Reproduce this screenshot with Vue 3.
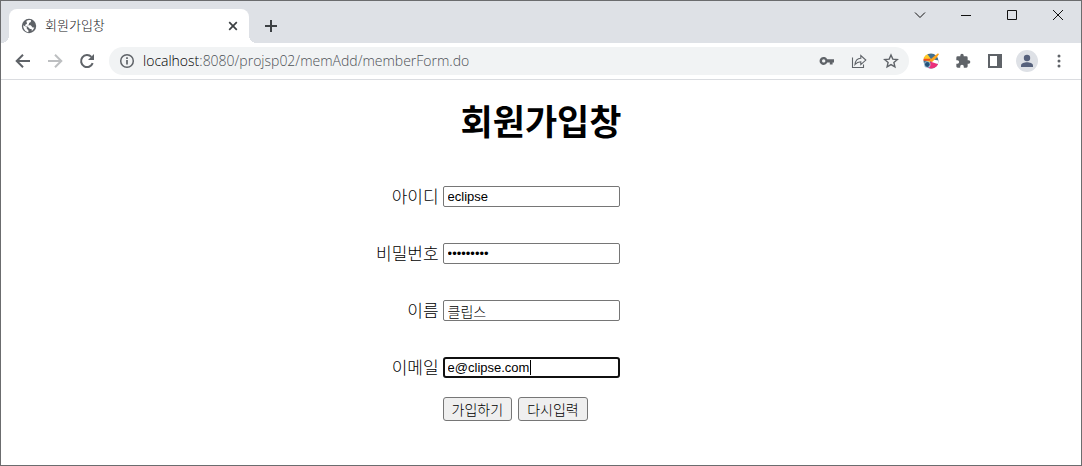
<template>
  <div class="window">
    <header class="titlebar">
      <div class="tab">
        <svg class="globe" viewBox="0 0 16 16" width="16" height="16">
          <circle cx="8" cy="8" r="7.2" fill="#5f6368" />
          <path d="M2.2 7.2l3.6 2v1.6l1.6 1.4v2C4.500 13.900 2.200 11 2.200 7.200zM5.400 3c1.500-1.100 3.200-1.200 4.600-.8L9.800 4 8 4.900v1.600L6.200 7.200h3.600l1.800 2.200 1.700.2c-.6 1.600-1.400 2.500-2.500 3.300L10.600 11H9L6.500 8.500H4.800L4 7l2-1.200z" fill="#fff" />
        </svg>
        <span class="tab-title">회원가입창</span>
        <button class="icon" aria-label="닫기">
          <svg viewBox="0 0 16 16" width="16" height="16"><path d="M4.200 4.200l7.600 7.600M11.800 4.200l-7.600 7.600" stroke="#3c4043" stroke-width="1.700" fill="none" /></svg>
        </button>
      </div>
      <button class="icon new-tab" aria-label="새 탭">
        <svg viewBox="0 0 16 16" width="16" height="16"><path d="M8 2v12M2 8h12" stroke="#3c4043" stroke-width="2" /></svg>
      </button>
      <div class="controls">
        <button v-for="c in controls" :key="c.label" :aria-label="c.label">
          <svg viewBox="0 0 12 12" width="12" height="12"><path :d="c.path" stroke="#111" fill="none" /></svg>
        </button>
      </div>
    </header>

    <nav class="toolbar">
      <button class="icon" aria-label="뒤로">
        <svg viewBox="0 0 16 16" width="16" height="16"><path d="M15 8H2M8 1.700L1.700 8 8 14.300" stroke="#5f6368" stroke-width="2" fill="none" /></svg>
      </button>
      <button class="icon" aria-label="앞으로">
        <svg viewBox="0 0 16 16" width="16" height="16"><path d="M1 8h13M8 1.700L14.300 8 8 14.300" stroke="#bdbfc1" stroke-width="2" fill="none" /></svg>
      </button>
      <button class="icon" aria-label="새로고침">
        <svg viewBox="0 0 16 16" width="16" height="16">
          <path d="M13.700 10.200A6 6 0 1 1 12.400 3.900" stroke="#5f6368" stroke-width="2" fill="none" />
          <path d="M15 1v6H9z" fill="#5f6368" />
        </svg>
      </button>
      <div class="address">
        <svg viewBox="0 0 16 16" width="16" height="16">
          <circle cx="8" cy="8" r="6.300" stroke="#5f6368" stroke-width="1.500" fill="none" />
          <path d="M8 7v4.500M8 4.300v1.600" stroke="#5f6368" stroke-width="1.700" />
        </svg>
        <span class="url"><b>localhost</b>:8080/projsp02/memAdd/memberForm.do</span>
        <button class="icon" aria-label="비밀번호 관리">
          <svg viewBox="0 0 16 16" width="16" height="16">
            <path fill-rule="evenodd" d="M8.200 6.300H15v3.200h-1.400v2h-2.800v-2H8.200A4 4 0 1 1 8.200 6.300zM4.700 6.200a1.700 1.700 0 1 0 0 3.400 1.700 1.700 0 0 0 0-3.400z" fill="#5f6368" />
          </svg>
        </button>
        <button class="icon" aria-label="공유">
          <svg viewBox="0 0 16 16" width="16" height="16">
            <path d="M1.500 4.500v10h11v-3M4 11.500c.4-4 2.600-6 5.800-6.200V2.500l5 4.600-5 4.500V8.800C7.200 8.800 5.500 9.700 4 11.500z" stroke="#5f6368" stroke-width="1.100" fill="none" />
          </svg>
        </button>
        <button class="icon" aria-label="북마크">
          <svg viewBox="0 0 16 16" width="16" height="16">
            <path d="M8 2l1.800 4.100 4.500.4-3.400 3 1 4.400L8 11.600l-3.900 2.300 1-4.400-3.400-3 4.500-.4z" stroke="#5f6368" stroke-width="1.400" fill="none" />
          </svg>
        </button>
      </div>
      <div class="extensions">
        <button class="icon" aria-label="색상 추출">
          <svg viewBox="0 0 16 16" width="16" height="16">
            <circle cx="8" cy="8" r="7.500" fill="#45718f" />
            <path d="M.6 5.500C1.200 3.500 2.500 2 4.500 1.200L9 7.500l-3 2z" fill="#ffca28" />
            <path d="M.6 5.800h6.700l1 2H.5z" fill="#f4511e" />
            <path d="M8 7.500l7 3.500c-1 2.800-3.700 4.600-7 4.600L5.500 15z" fill="#ec2f7b" />
            <path d="M10.500 6.500l4.900 1c0 1.500-.2 2.600-.7 3.600L8.500 9z" fill="#fff" />
            <path d="M6.500 7.200l5-4.200L15 .2l1 1-2.500 3.500L9 9z" fill="#ffa51c" />
            <circle cx="4.300" cy="11.500" r="3.200" fill="#a9c3d6" />
            <circle cx="4.300" cy="11.500" r="2.400" fill="#24527a" />
          </svg>
        </button>
        <button class="icon" aria-label="확장 프로그램">
          <svg viewBox="0 0 24 24" width="16" height="16">
            <path d="M20.500 11H19V7a2 2 0 0 0-2-2h-4V3.500a2.500 2.500 0 0 0-5 0V5H4a2 2 0 0 0-2 2v3.800h1.500a2.700 2.700 0 0 1 0 5.400H2V20c0 1.100.9 2 2 2h3.800v-1.500a2.700 2.700 0 0 1 5.400 0V22H17a2 2 0 0 0 2-2v-4h1.500a2.500 2.500 0 0 0 0-5z" fill="#5f6368" />
          </svg>
        </button>
        <button class="icon" aria-label="사이드 패널">
          <svg viewBox="0 0 16 16" width="16" height="16"><path fill-rule="evenodd" d="M1 1h14v14H1zM3 3v10h7V3z" fill="#5f6368" /></svg>
        </button>
        <button class="icon avatar" aria-label="프로필">
          <svg viewBox="0 0 16 16" width="16" height="16">
            <circle cx="8" cy="5" r="3.200" fill="#56617c" />
            <path d="M2 14v-1.500c0-2.200 3.500-3.300 6-3.300s6 1.100 6 3.300V14z" fill="#56617c" />
          </svg>
        </button>
        <button class="icon" aria-label="메뉴">
          <svg viewBox="0 0 16 16" width="16" height="16" fill="#5f6368">
            <circle cx="8" cy="3" r="1.500" /><circle cx="8" cy="8" r="1.500" /><circle cx="8" cy="13" r="1.500" />
          </svg>
        </button>
      </div>
    </nav>

    <main>
      <h1>회원가입창</h1>
      <form @submit.prevent>
        <div v-for="f in fields" :key="f.id" class="row">
          <label :for="f.id">{{ f.label }}</label>
          <div class="field">
            <input :id="f.id" v-model="f.value" :type="f.type" :class="{ active: f.active, korean: f.korean }" autocomplete="off">
            <span v-if="f.active" class="caret"></span>
          </div>
        </div>
        <div class="buttons">
          <button type="submit">가입하기</button>
          <button type="button" @click="onReset">다시입력</button>
        </div>
      </form>
    </main>
  </div>
</template>

<script setup>
import { ref } from "vue"

const controls = [
  { label: "탭 검색", path: "M1 3.500l5 5 5-5" },
  { label: "최소화", path: "M1 6.500h10" },
  { label: "최대화", path: "M1.500 1.500h9v9h-9z" },
  { label: "창 닫기", path: "M1 1l10 10M11 1L1 11" },
]

const fields = ref([
  { id: "id", label: "아이디", type: "text", value: "eclipse" },
  { id: "pwd", label: "비밀번호", type: "password", value: "123456789" },
  { id: "name", label: "이름", type: "text", value: "클립스", korean: true },
  { id: "email", label: "이메일", type: "text", value: "e@clipse.com", active: true },
])

function onReset() {
  fields.value.forEach(f => {
    f.value = ""
  })
}
</script>

<style>
  body {
    margin: 0;
  }
</style>

<style scoped>
  .window {
    box-sizing: border-box;
    min-height: 100vh;
    border: 1px solid #6b6c6e;
    background: #fff;
    color: #000;
    font-family: "Noto Sans CJK KR", sans-serif;
  }

  svg {
    display: block;
    flex-shrink: 0;
  }

  .titlebar {
    display: flex;
    height: 42px;
    padding-left: 8px;
    background: #dee1e6;
  }

  .tab {
    position: relative;
    box-sizing: border-box;
    display: flex;
    align-items: center;
    width: 240px;
    height: 34px;
    margin-top: 8px;
    padding: 0 8px 0 12px;
    border-radius: 8px 8px 0 0;
    background: #fff;
  }

  .tab::before,
  .tab::after {
    content: "";
    position: absolute;
    bottom: 0;
    width: 8px;
    height: 8px;
  }

  .tab::before {
    right: 100%;
    background: radial-gradient(circle at 0 0, #dee1e6 8px, #fff 8px);
  }

  .tab::after {
    left: 100%;
    background: radial-gradient(circle at 100% 0, #dee1e6 8px, #fff 8px);
  }

  .tab-title {
    flex: 1;
    margin-left: 8px;
    color: #202124;
    font-size: 13px;
    font-weight: 300;
    line-height: 18px;
    padding-bottom: 2px;
  }

  .icon {
    display: flex;
    align-items: center;
    justify-content: center;
    width: 16px;
    height: 16px;
    padding: 0;
    border: 0;
    background: none;
  }

  .new-tab {
    margin: 17px 0 0 14px;
  }

  .controls {
    display: flex;
    margin-left: auto;
  }

  .controls button {
    display: flex;
    align-items: center;
    justify-content: center;
    width: 46px;
    height: 28px;
    padding: 0;
    border: 0;
    background: none;
  }

  .toolbar {
    display: flex;
    align-items: center;
    gap: 16px;
    height: 36px;
    padding: 0 14px;
    border-bottom: 1px solid #dadce0;
  }

  .address {
    display: flex;
    flex: 1;
    align-items: center;
    gap: 16px;
    height: 28px;
    margin-left: -2px;
    padding: 0 10px;
    border-radius: 14px;
    background: #f1f3f4;
  }

  .url {
    flex: 1;
    margin-left: -8px;
    color: #4d5156;
    font-family: "Open Sans", sans-serif;
    font-size: 14px;
    font-weight: 300;
    line-height: 20px;
  }

  .url b {
    color: #000;
    font-weight: 300;
  }

  .extensions {
    display: flex;
    align-items: center;
    gap: 16px;
    margin-left: -2px;
  }

  .avatar {
    width: 22px;
    height: 22px;
    margin: 0 -3px;
    border-radius: 50%;
    background: #dee1e6;
  }

  main {
    padding: 16px 8px;
  }

  h1 {
    margin: 0 0 24px;
    font-size: 35px;
    font-weight: 700;
    line-height: 48px;
    text-align: center;
  }

  .row {
    display: grid;
    grid-template-columns: calc(40% + 4px) 1fr;
    align-items: center;
    gap: 4px;
    height: 57px;
  }

  label {
    padding-bottom: 2px;
    font-size: 17px;
    font-weight: 300;
    line-height: 24px;
    text-align: right;
  }

  .field {
    position: relative;
    display: flex;
  }

  input {
    box-sizing: border-box;
    width: 177px;
    height: 21px;
    padding: 1px 4px;
    border: 1px solid #767676;
    border-radius: 2px;
    outline: 0;
    background: #fff;
    color: #000;
    font-family: "Liberation Sans", "Noto Sans CJK KR", sans-serif;
    font-size: 13px;
  }

  input.korean {
    font-family: "Noto Sans CJK KR", sans-serif;
    font-size: 14px;
    font-weight: 300;
  }

  input.active {
    padding: 0 3px;
    border: 2px solid #101010;
    border-radius: 3px;
  }

  .caret {
    position: absolute;
    top: 3px;
    left: 87px;
    width: 1px;
    height: 15px;
    background: #000;
  }

  .buttons {
    display: flex;
    gap: 6px;
    margin: 1px 0 0 calc(40% + 8px);
  }

  .buttons button {
    height: 24px;
    padding: 0 8px;
    border: 1px solid #767676;
    border-radius: 3px;
    background: #efefef;
    color: #000;
    font-family: "Noto Sans CJK KR", sans-serif;
    font-size: 14px;
    font-weight: 300;
    line-height: 20px;
  }
</style>
